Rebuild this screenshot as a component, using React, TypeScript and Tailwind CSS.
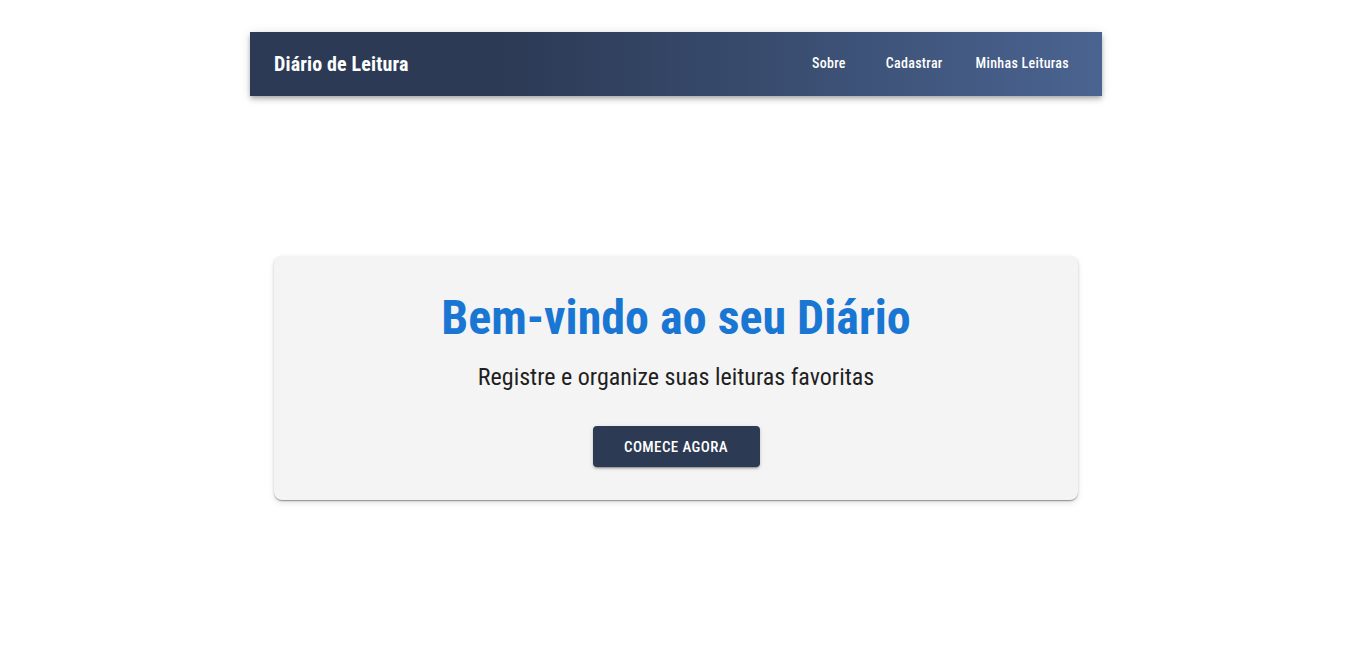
import React from "react";

export default function App() {
  return (
    <div
      className="min-h-screen bg-white pl-[4px]"
      style={{ fontFamily: '"Roboto Condensed", Roboto, "Liberation Sans", sans-serif', fontStretch: "condensed" }}
    >
      <div className="mx-auto w-[852px] pt-[32px]">
        <header className="flex h-[64px] items-center justify-between bg-gradient-to-r from-[#2c3a55] from-30% to-[#4a6491] pl-[24px] pr-[33px] shadow-[0_2px_4px_-1px_rgba(0,0,0,0.2),0_4px_5px_0_rgba(0,0,0,0.14),0_1px_10px_0_rgba(0,0,0,0.12)]">
          <h1 className="text-[20px] font-bold tracking-[0.15px] text-white">Diário de Leitura</h1>
          <nav className="flex items-center pb-[1px] text-[14px] font-medium tracking-[0.3px] text-white">
            <a>Sobre</a>
            <a className="ml-[40px]">Cadastrar</a>
            <a className="ml-[33px]">Minhas Leituras</a>
          </nav>
        </header>
        <main className="mt-[160px] px-[24px]">
          <section className="flex h-[244px] flex-col items-center rounded-[8px] bg-[#f4f4f4] pt-[30px] shadow-[0_2px_1px_-1px_rgba(0,0,0,0.2),0_1px_1px_0_rgba(0,0,0,0.14),0_1px_3px_0_rgba(0,0,0,0.12),0_3px_6px_rgba(0,0,0,0.1)]">
            <h2 className="text-[48px] font-bold leading-[64px] text-[#1976d2]">Bem-vindo ao seu Diário</h2>
            <p className="mt-[11px] text-[24px] leading-[32px] text-[#1f1f1f]">Registre e organize suas leituras favoritas</p>
            <button className="mt-[33px] h-[41px] w-[167px] rounded-[4px] bg-[#2d3a53] pt-[1px] text-[15px] font-medium uppercase tracking-[0.4px] text-white shadow-[0_3px_1px_-2px_rgba(0,0,0,0.2),0_2px_2px_0_rgba(0,0,0,0.14),0_1px_5px_0_rgba(0,0,0,0.12)]">
              Comece agora
            </button>
          </section>
        </main>
      </div>
    </div>
  );
}
